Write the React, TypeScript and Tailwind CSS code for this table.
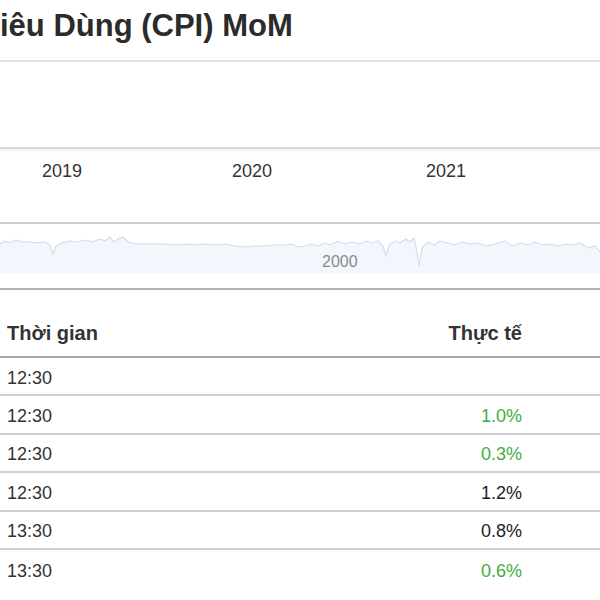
import React from 'react';

const navPoints: [number, number][] = [
  [0, 244], [5, 241], [10, 243], [16, 240], [22, 242], [30, 242], [38, 243], [45, 242], [50, 245], [53, 254],
  [56, 246], [62, 243], [70, 241], [78, 242], [85, 240], [92, 242], [100, 239], [105, 241], [110, 237], [114, 242],
  [118, 239], [123, 237], [128, 242], [135, 244], [150, 244], [165, 244], [175, 245], [185, 244], [195, 245],
  [205, 244], [215, 245], [225, 244], [235, 246], [245, 247], [255, 246], [265, 246], [275, 245], [285, 245],
  [292, 244], [298, 247], [305, 246], [312, 244], [318, 246], [325, 243], [330, 245], [338, 241], [345, 244],
  [352, 242], [360, 244], [366, 241], [372, 243], [378, 241], [383, 246], [386, 256], [389, 245], [395, 241],
  [400, 243], [406, 239], [410, 242], [414, 238], [417, 252], [419, 266], [422, 248], [428, 242], [434, 245],
  [440, 241], [448, 243], [455, 245], [462, 242], [470, 244], [478, 243], [486, 246], [495, 244], [505, 241],
  [512, 246], [520, 243], [528, 245], [535, 242], [542, 245], [550, 244], [558, 246], [565, 244], [572, 245],
  [580, 243], [588, 248], [595, 246], [600, 252],
];

const rows = [
  { time: '12:30', actual: '', up: false },
  { time: '12:30', actual: '1.0%', up: true },
  { time: '12:30', actual: '0.3%', up: true },
  { time: '12:30', actual: '1.2%', up: false },
  { time: '13:30', actual: '0.8%', up: false },
  { time: '13:30', actual: '0.6%', up: true },
];

function Navigator() {
  // svg top sits at y=224 in the page
  const line = navPoints.map(([x, y]) => `${x},${y - 224}`).join(' ');
  const area = `0,49 ${line} 600,49`;
  return (
    <div className="relative h-[64px]">
      <svg width="600" height="64" viewBox="0 0 600 64" className="block">
        <polygon points={area} fill="#f3f7fd" />
        <polyline points={line} fill="none" stroke="#cfdcec" strokeWidth="1.1" />
      </svg>
      <span className="absolute left-[322px] top-[28px] text-[16px] leading-5 text-[#8a8a8a]">2000</span>
    </div>
  );
}

export default function App() {
  return (
    <div className="w-[600px] h-[600px] overflow-hidden bg-white font-['Liberation_Sans',Arial,sans-serif] text-[#333]">
      <div className="h-[60px] pt-[11px]">
        <h1 className="text-[31px] font-bold leading-[30px] text-[#2b2b2b] whitespace-nowrap">iêu Dùng (CPI) MoM</h1>
      </div>
      <div className="h-[2px] bg-[#e2e2e2]" />
      <div className="h-[85px]" />
      <div className="h-[2px] bg-[#d6d6d6] shadow-[0_2px_3px_rgba(0,0,0,0.08)]" />
      <div className="h-[73px] flex pl-[42px] pt-[12px] text-[18px] leading-5 text-[#333]">
        <span className="w-[190px]">2019</span>
        <span className="w-[194px]">2020</span>
        <span>2021</span>
      </div>
      <div className="h-[2px] bg-[#cccccc]" />
      <Navigator />
      <div className="h-[2px] bg-[#b5b5b5]" />
      <div className="h-[66px] flex items-end pb-[12px] pl-[7px] pr-[78px] text-[20px] font-bold leading-[22px] text-[#333]">
        <span className="flex-1">Thời gian</span>
        <span>Thực tế</span>
      </div>
      <div className="h-[2px] bg-[#a9a9a9]" />
      {rows.map((r, i) => (
        <div key={i} className="h-[38.4px] flex items-center pt-[3px] pl-[7px] pr-[78px] border-b-2 border-[#d0d0d0] last:border-b-0 text-[18px] leading-5">
          <span className="flex-1 text-[#333]">{r.time}</span>
          <span className={r.up ? 'text-[#3fae3f]' : 'text-[#222]'}>{r.actual}</span>
        </div>
      ))}
    </div>
  );
}
